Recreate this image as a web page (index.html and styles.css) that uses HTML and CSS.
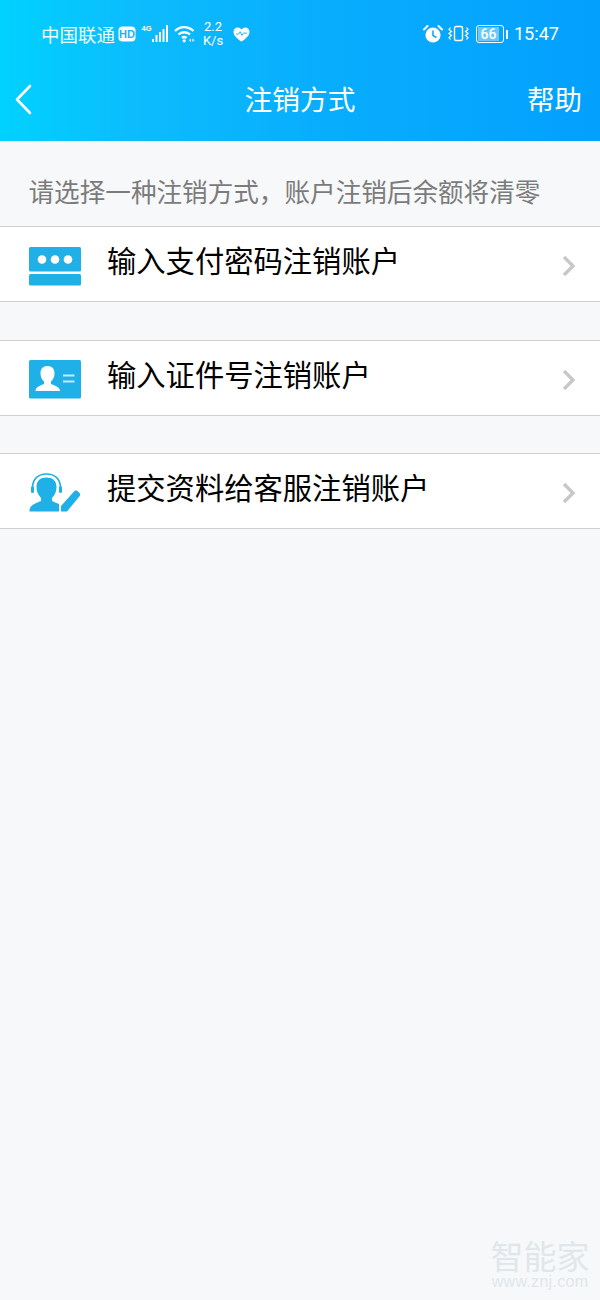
FILE: index.html
```html
<!DOCTYPE html>
<html lang="zh-CN">
<head>
    <meta charset="UTF-8">
    <meta name="viewport" content="width=device-width, initial-scale=1.0">
    <title>注销方式</title>
    <link rel="stylesheet" href="styles.css">
</head>
<body>

<header class="topo">
    <div class="status">
        <div class="status-esq">
            <span class="operadora">中国联通</span>
            <svg class="ico-hd" width="18" height="16" viewBox="0 0 18 16">
                <rect x="0.5" y="0.5" width="17" height="15" rx="4" fill="#fff"/>
                <text x="9" y="12" text-anchor="middle" class="hd-txt">HD</text>
            </svg>
            <svg class="ico-sinal" width="30" height="20" viewBox="0 0 30 20">
                <text x="1.5" y="7" class="g-txt">4G</text>
                <g fill="#fff">
                    <rect x="12" y="15" width="2" height="3"/>
                    <rect x="15.5" y="11" width="2" height="7"/>
                    <rect x="19" y="8" width="2" height="10"/>
                    <rect x="22.5" y="5" width="2" height="13"/>
                    <rect x="26" y="1" width="2" height="17"/>
                </g>
            </svg>
            <svg class="ico-wifi" width="22" height="18" viewBox="0 0 22 18" fill="none" stroke="#fff" stroke-width="2.3">
                <path d="M1 6 C6 0.8 14 0.8 19.5 6"/>
                <path d="M4.5 9.5 C7.5 6.5 13 6.5 16 9.5"/>
                <path d="M8 13 C9.2 12 11.3 12 12.5 13"/>
                <circle cx="10.2" cy="15.8" r="1.6" fill="#fff" stroke="none"/>
                <path d="M17 13.5 L15 15.3 L17 17 Z M18.5 13.5 L20.5 15.3 L18.5 17 Z" fill="#fff" stroke="none"/>
            </svg>
            <div class="veloc"><span>2.2</span><span>K/s</span></div>
            <svg class="ico-coracao" width="17" height="15" viewBox="0 0 18 16">
                <path d="M9 15.5 C4 12 0.5 9 0.5 5 C0.5 2.2 2.6 0.5 5 0.5 C6.6 0.5 8 1.3 9 2.6 C10 1.3 11.4 0.5 13 0.5 C15.4 0.5 17.5 2.2 17.5 5 C17.5 9 14 12 9 15.5 Z" fill="#fff"/>
                <path d="M3 7.5h3l1.5-2.5 2 4 1.5-2.5 h4" fill="none" stroke="#1cb4fb" stroke-width="1"/>
            </svg>
        </div>
        <div class="status-dir">
            <svg class="ico-alarme" width="20" height="18" viewBox="0 0 20 18">
                <circle cx="10" cy="10" r="7.6" fill="#fff"/>
                <path d="M10 5.5V10.5L13.5 12.5" fill="none" stroke="#12aafc" stroke-width="1.6"/>
                <path d="M1 4.5 L4.5 1 M19 4.5 L15.5 1" stroke="#fff" stroke-width="2" stroke-linecap="round"/>
            </svg>
            <svg class="ico-vibra" width="22" height="18" viewBox="0 0 22 18" fill="none" stroke="#fff" stroke-width="1.4">
                <rect x="6.5" y="1.5" width="8" height="14" rx="1.5"/>
                <path d="M2.5 2.5 L1 4.5 L3.5 6.5 L1 8.5 L3.5 10.5 L1 12.5 L2.5 14.5" stroke-width="1.2"/>
                <path d="M18.5 2.5 L20 4.5 L17.5 6.5 L20 8.5 L17.5 10.5 L20 12.5 L18.5 14.5" stroke-width="1.2"/>
            </svg>
            <div class="bateria"><span class="bateria-nivel">66</span></div>
            <span class="bateria-polo"></span>
            <span class="hora">15:47</span>
        </div>
    </div>
    <nav class="barra">
        <svg class="voltar" width="18" height="31" viewBox="0 0 18 31" fill="none" stroke="#fff" stroke-width="2.6" stroke-linecap="round" stroke-linejoin="round">
            <path d="M15 2 L2 15.5 L15 29"/>
        </svg>
        <h1 class="titulo">注销方式</h1>
        <span class="ajuda">帮助</span>
    </nav>
</header>

<p class="aviso">请选择一种注销方式，账户注销后余额将清零</p>

<ul class="lista">
    <li class="item">
        <svg class="item-ico" width="52" height="39" viewBox="0 0 52 39">
            <rect x="0" y="0" width="52" height="24.5" rx="1.5" fill="#1fb0e8"/>
            <rect x="0" y="27" width="52" height="11.5" rx="1.5" fill="#1fb0e8"/>
            <circle cx="13" cy="12.5" r="4.3" fill="#fff"/>
            <circle cx="26" cy="12.5" r="4.3" fill="#fff"/>
            <circle cx="39" cy="12.5" r="4.3" fill="#fff"/>
        </svg>
        <span class="item-txt">输入支付密码注销账户</span>
        <svg class="seta" width="14" height="22" viewBox="0 0 14 22" fill="none" stroke="#c8c8c8" stroke-width="3.4"><path d="M2 2 L11 11 L2 20"/></svg>
    </li>
    <li class="item">
        <svg class="item-ico" width="52" height="39" viewBox="0 0 52 39">
            <rect x="0" y="0" width="52" height="38.5" rx="1.5" fill="#1fb0e8"/>
            <path d="M6.5 31 C6.5 26.5 12 25.5 15 24 L15 21.5 C12.5 19.5 11.5 16.5 11.5 13 C11.5 8.5 14.5 6 18.5 6 C22.5 6 25.5 8.5 25.5 13 C25.5 16.5 24.5 19.5 22 21.5 L22 24 C25 25.5 31 26.5 31 31 Z" fill="#fff"/>
            <rect x="34" y="14.5" width="11.5" height="2" fill="#c9eaf8"/>
            <rect x="34" y="20.5" width="11.5" height="2" fill="#c9eaf8"/>
        </svg>
        <span class="item-txt">输入证件号注销账户</span>
        <svg class="seta" width="14" height="22" viewBox="0 0 14 22" fill="none" stroke="#c8c8c8" stroke-width="3.4"><path d="M2 2 L11 11 L2 20"/></svg>
    </li>
    <li class="item">
        <svg class="item-ico" width="52" height="39" viewBox="0 0 52 39">
            <path d="M3.5 18 V15 C3.5 6 9 1 17.5 1 C26 1 31.5 6 31.5 15 V18" fill="none" stroke="#1fb0e8" stroke-width="1.6"/>
            <rect x="2" y="13" width="3" height="7" rx="1.5" fill="#1fb0e8"/>
            <rect x="30" y="13" width="3" height="7" rx="1.5" fill="#1fb0e8"/>
            <path d="M0.5 38.5 C0 32.5 6 30.5 12 28 L12 25 C9 22 7.5 18 7.5 14 C7.5 7.5 11.5 4.5 17.5 4.5 C23.5 4.5 27.5 7.5 27.5 14 C27.5 18 26 22 23 25 L23 28 C25 29 27.5 30 30 31 L30 38.5 Z" fill="#1fb0e8"/>
            <path d="M32 38.5 V33 L45 18.5 C46 17.3 47.5 17.3 48.5 18 L50.5 20 C51.5 21 51.5 22.2 50.5 23.3 L38 38.5 Z" fill="#1fb0e8"/>
        </svg>
        <span class="item-txt">提交资料给客服注销账户</span>
        <svg class="seta" width="14" height="22" viewBox="0 0 14 22" fill="none" stroke="#c8c8c8" stroke-width="3.4"><path d="M2 2 L11 11 L2 20"/></svg>
    </li>
</ul>

<!-- marca d'agua -->
<div class="marca">
    <span class="marca-nome">智能家</span>
    <span class="marca-url">www.znj.com</span>
</div>

</body>
</html>
```

FILE: styles.css
```css
* {
    box-sizing: border-box;
}

html, body {
    height: 100%;
}

body {
    margin: 0;
    position: relative;
    overflow: hidden;
    background-color: #f7f8fa;
    font-family: "Noto Sans CJK SC", "Noto Sans", sans-serif;
    color: #000000;
}

.topo {
    height: 141px;
    background: linear-gradient(90deg, #00d2ff 0%, #0cbcfd 22%, #08adfd 55%, #03a0fe 100%);
    color: white;
}

.status {
    height: 70px;
    padding: 20px 41px 0 41px;
    display: flex;
    justify-content: space-between;
    align-items: flex-start;
}

.status-esq, .status-dir {
    display: flex;
    align-items: center;
    height: 28px;
}

.operadora {
    font-size: 18.5px;
    line-height: 28px;
    width: 77px;
    opacity: 0.95;
}

.ico-hd {
    margin-right: 4px;
}

.hd-txt {
    font-family: "Liberation Sans", sans-serif;
    font-size: 11px;
    font-weight: bold;
    fill: #12b8fb;
}

.g-txt {
    font-family: "Liberation Sans", sans-serif;
    font-size: 7.5px;
    font-weight: bold;
    fill: white;
}

.ico-sinal {
    margin-right: 4px;
}

.ico-wifi {
    margin-right: 7px;
}

.veloc {
    display: flex;
    flex-direction: column;
    align-items: center;
    width: 20px;
    margin-right: 10px;
    font-family: Roboto, sans-serif;
    font-size: 13px;
    line-height: 14.5px;
}

.status-dir {
    font-family: Roboto, sans-serif;
}

.ico-alarme {
    margin-right: 5px;
}

.ico-vibra {
    margin-right: 6px;
}

.bateria {
    width: 28px;
    height: 18px;
    border: 1px solid white;
    border-radius: 3px;
    padding: 1px;
}

.bateria-nivel {
    display: block;
    width: 21px;
    height: 14px;
    background-color: rgba(255, 255, 255, 0.4);
    font-size: 14px;
    font-weight: 500;
    line-height: 14px;
    text-align: center;
}

.bateria-polo {
    width: 2px;
    height: 9px;
    margin-left: 2px;
    margin-right: 6px;
    background-color: white;
}

.hora {
    font-size: 18.1px;
    line-height: 28px;
}

.barra {
    height: 71px;
    padding: 0 18px 13px 15px;
    display: flex;
    align-items: center;
    justify-content: space-between;
    position: relative;
}

.titulo {
    position: absolute;
    left: 0;
    right: 0;
    margin: -2px 0 0;
    font-size: 27.7px;
    font-weight: 400;
    text-align: center;
}

.ajuda {
    margin-top: -2px;
    font-size: 27.5px;
}

.aviso {
    margin: 0;
    height: 85px;
    padding: 31px 0 0 28.5px;
    font-size: 25.6px;
    line-height: 37px;
    color: #7b7b7b;
    white-space: nowrap;
}

.lista {
    list-style: none;
    margin: 0;
    padding: 0;
}

.item {
    height: 76px;
    margin-bottom: 37px;
    padding: 0 24.5px 0 28.5px;
    display: flex;
    align-items: center;
    background-color: white;
    border-top: 1px solid #d0d0d0;
    border-bottom: 1px solid #d0d0d0;
}

.item:first-child {
    margin-bottom: 38px;
}

.item-ico {
    flex: none;
    margin-top: 2px;
    margin-right: 26.5px;
}

.item:first-child .item-ico {
    margin-top: 4px;
}

.item-txt {
    flex: 1;
    font-size: 29.3px;
    line-height: 40px;
    margin-top: -10px;
}

.seta {
    flex: none;
    margin-top: 3px;
}

.marca {
    position: absolute;
    right: 10px;
    top: 1238px;
    width: 100px;
    display: flex;
    flex-direction: column;
    align-items: center;
    color: #dfe7ea;
}

.marca-nome {
    font-size: 33px;
    line-height: 34px;
}

.marca-url {
    font-family: "Liberation Sans", sans-serif;
    font-size: 16px;
    line-height: 20px;
    letter-spacing: 0.3px;
}
```
